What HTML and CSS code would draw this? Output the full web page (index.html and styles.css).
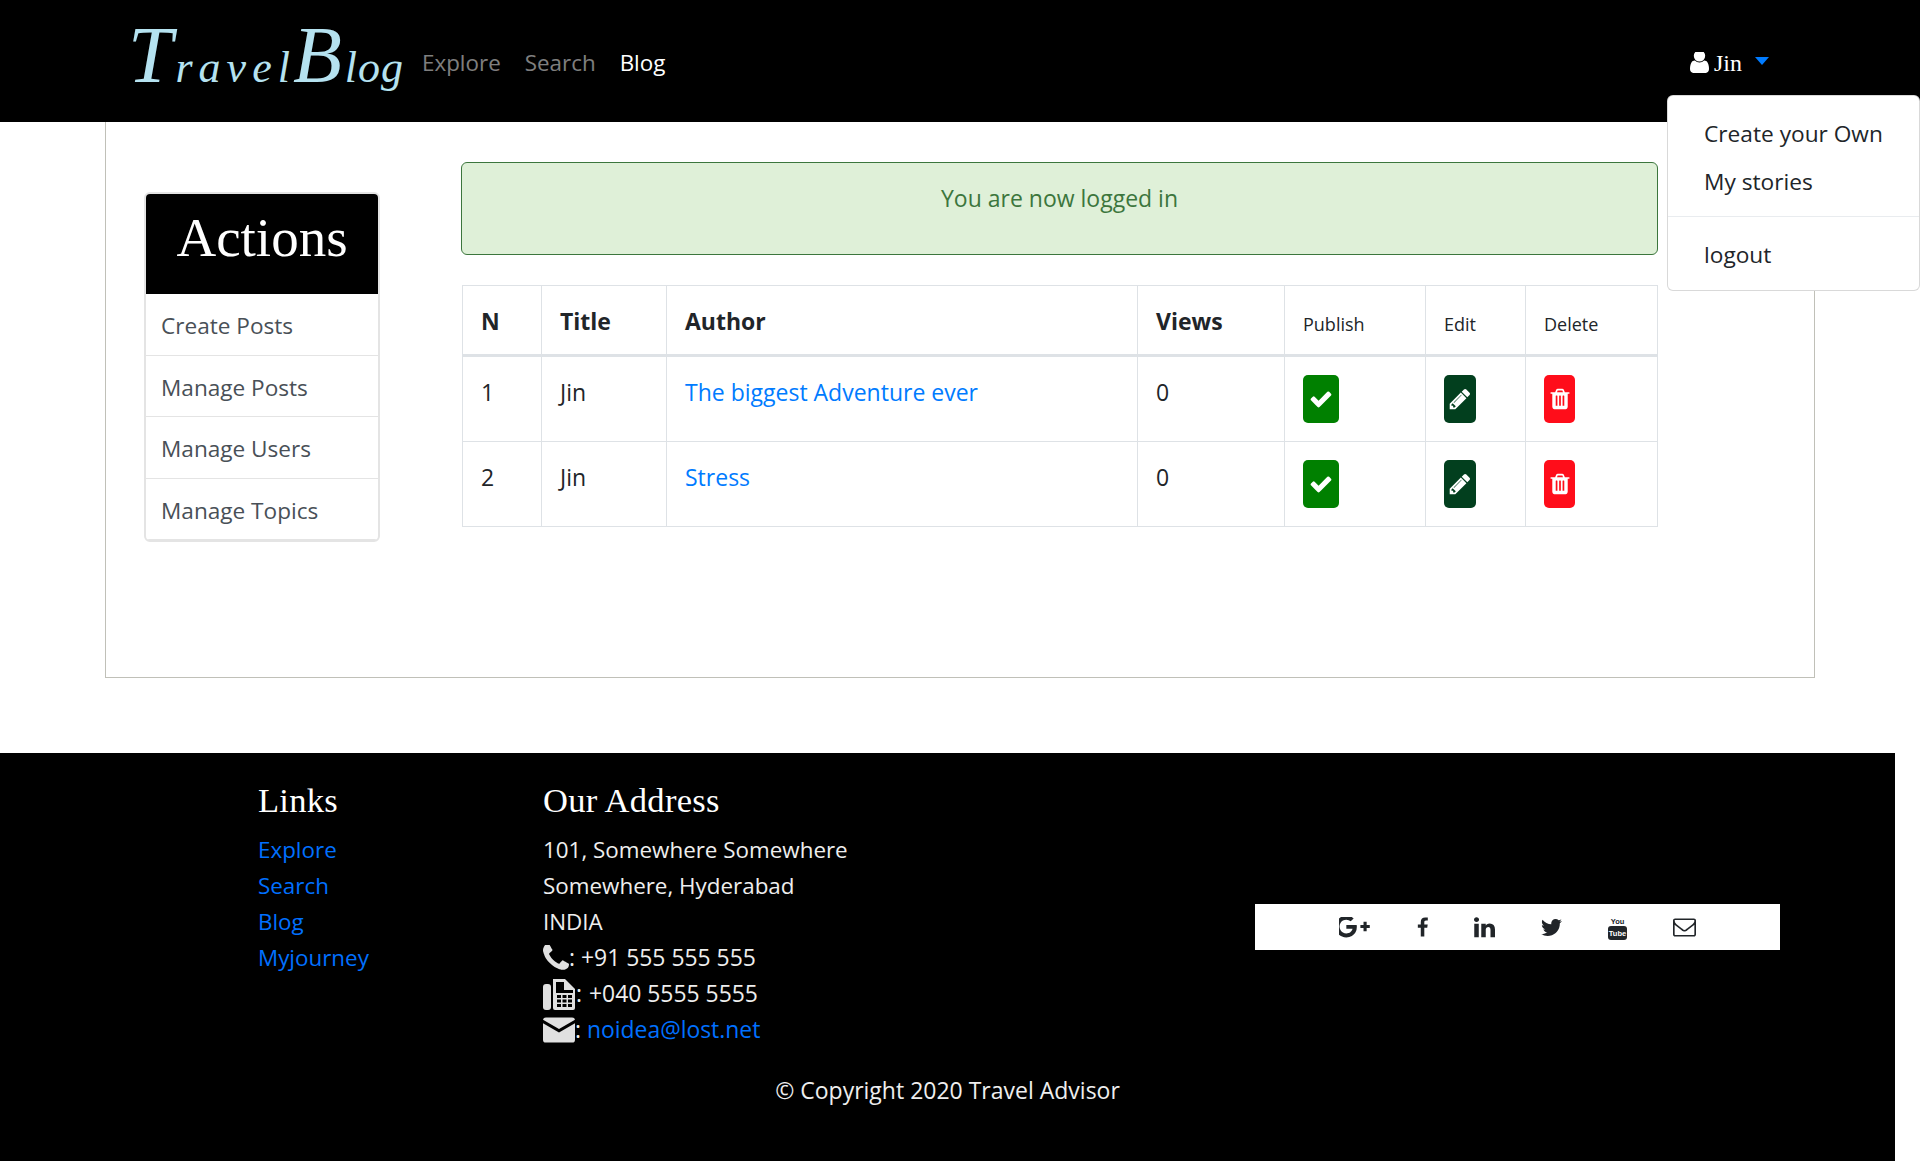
FILE: index.html
```html
<!DOCTYPE html>
<html lang="en">
<head>
<meta charset="utf-8">
<title>TravelBlog</title>
<link rel="stylesheet" href="styles.css">
</head>
<body>
<header class="navbar">
  <a class="logo" href="#"><span class="logo-t">T</span><span class="logo-ravel">ravel</span><span class="logo-bb">B</span><span class="logo-log">log</span></a>
  <nav class="nav-links">
    <a href="#">Explore</a>
    <a href="#">Search</a>
    <a class="active" href="#">Blog</a>
  </nav>
  <div class="user">
    <svg class="user-icon" viewBox="256 256 1280 1408"><path d="M1536 1399q0 109-62.500 187t-150.500 78h-854q-88 0-150.500-78t-62.500-187q0-85 8.500-160.500t31.500-152 58.500-131 94-89 134.500-34.500q131 128 313 128t313-128q76 0 134.500 34.500t94 89 58.500 131 31.500 152 8.500 160.500zm-256-887q0 159-112.500 271.500t-271.500 112.500-271.500-112.500-112.500-271.500 112.500-271.500 271.500-112.500 271.500 112.500 112.500 271.500z"/></svg>
    <span class="user-name">Jin</span>
    <span class="caret"></span>
  </div>
  <div class="dropdown">
    <a href="#">Create your Own</a>
    <a href="#">My stories</a>
    <hr class="dropdown-divider">
    <a href="#">logout</a>
  </div>
</header>

<main class="main">
  <aside class="card">
    <h2 class="card-title">Actions</h2>
    <a class="card-item" href="#">Create Posts</a>
    <a class="card-item" href="#">Manage Posts</a>
    <a class="card-item" href="#">Manage Users</a>
    <a class="card-item" href="#">Manage Topics</a>
  </aside>
  <section class="content">
    <div class="alert">You are now logged in</div>
    <table class="table">
      <colgroup>
        <col class="c1"><col class="c2"><col class="c3"><col class="c4"><col class="c5"><col class="c6"><col class="c7">
      </colgroup>
      <thead>
        <tr>
          <th>N</th><th>Title</th><th>Author</th><th>Views</th>
          <th class="small">Publish</th><th class="small">Edit</th><th class="small">Delete</th>
        </tr>
      </thead>
      <tbody>
        <tr>
          <td>1</td><td>Jin</td><td><a href="#">The biggest Adventure ever</a></td><td>0</td>
          <td><a class="btn btn-publish" href="#"><svg viewBox="0 0 1792 1792"><path d="M1671 566q0 40-28 68l-724 724-136 136q-28 28-68 28t-68-28l-136-136-362-362q-28-28-28-68t28-68l136-136q28-28 68-28t68 28l294 295 656-657q28-28 68-28t68 28l136 136q28 28 28 68z"/></svg></a></td>
          <td><a class="btn btn-edit" href="#"><svg viewBox="0 0 1792 1792"><path d="M491 1536l91-91-235-235-91 91v107h128v128h107zm523-928q0-22-22-22-10 0-17 7l-542 542q-7 7-7 17 0 22 22 22 10 0 17-7l542-542q7-7 7-17zm-54-192l416 416-832 832h-416v-416zm683 96q0 53-37 90l-166 166-416-416 166-165q36-38 90-38 53 0 91 38l235 234q37 39 37 91z"/></svg></a></td>
          <td><a class="btn btn-delete" href="#"><svg viewBox="0 0 1792 1792"><path d="M704 1376v-704q0-14-9-23t-23-9h-64q-14 0-23 9t-9 23v704q0 14 9 23t23 9h64q14 0 23-9t9-23zm256 0v-704q0-14-9-23t-23-9h-64q-14 0-23 9t-9 23v704q0 14 9 23t23 9h64q14 0 23-9t9-23zm256 0v-704q0-14-9-23t-23-9h-64q-14 0-23 9t-9 23v704q0 14 9 23t23 9h64q14 0 23-9t9-23zm-544-992h448l-48-117q-7-9-17-11h-317q-10 2-17 11zm928 32v64q0 14-9 23t-23 9h-96v948q0 83-47 143.500t-113 60.500h-832q-66 0-113-58.500t-47-141.500v-952h-96q-14 0-23-9t-9-23v-64q0-14 9-23t23-9h309l70-167q15-37 54-63t79-26h320q40 0 79 26t54 63l70 167h309q14 0 23 9t9 23z"/></svg></a></td>
        </tr>
        <tr>
          <td>2</td><td>Jin</td><td><a href="#">Stress</a></td><td>0</td>
          <td><a class="btn btn-publish" href="#"><svg viewBox="0 0 1792 1792"><path d="M1671 566q0 40-28 68l-724 724-136 136q-28 28-68 28t-68-28l-136-136-362-362q-28-28-28-68t28-68l136-136q28-28 68-28t68 28l294 295 656-657q28-28 68-28t68 28l136 136q28 28 28 68z"/></svg></a></td>
          <td><a class="btn btn-edit" href="#"><svg viewBox="0 0 1792 1792"><path d="M491 1536l91-91-235-235-91 91v107h128v128h107zm523-928q0-22-22-22-10 0-17 7l-542 542q-7 7-7 17 0 22 22 22 10 0 17-7l542-542q7-7 7-17zm-54-192l416 416-832 832h-416v-416zm683 96q0 53-37 90l-166 166-416-416 166-165q36-38 90-38 53 0 91 38l235 234q37 39 37 91z"/></svg></a></td>
          <td><a class="btn btn-delete" href="#"><svg viewBox="0 0 1792 1792"><path d="M704 1376v-704q0-14-9-23t-23-9h-64q-14 0-23 9t-9 23v704q0 14 9 23t23 9h64q14 0 23-9t9-23zm256 0v-704q0-14-9-23t-23-9h-64q-14 0-23 9t-9 23v704q0 14 9 23t23 9h64q14 0 23-9t9-23zm256 0v-704q0-14-9-23t-23-9h-64q-14 0-23 9t-9 23v704q0 14 9 23t23 9h64q14 0 23-9t9-23zm-544-992h448l-48-117q-7-9-17-11h-317q-10 2-17 11zm928 32v64q0 14-9 23t-23 9h-96v948q0 83-47 143.500t-113 60.500h-832q-66 0-113-58.500t-47-141.500v-952h-96q-14 0-23-9t-9-23v-64q0-14 9-23t23-9h309l70-167q15-37 54-63t79-26h320q40 0 79 26t54 63l70 167h309q14 0 23 9t9 23z"/></svg></a></td>
        </tr>
      </tbody>
    </table>
  </section>
</main>

<footer class="footer">
  <div class="footer-row">
    <div class="col-links">
      <h5 class="footer-title">Links</h5>
      <a href="#">Explore</a>
      <a href="#">Search</a>
      <a href="#">Blog</a>
      <a href="#">Myjourney</a>
    </div>
    <div class="col-address">
      <h5 class="footer-title">Our Address</h5>
      <div>101, Somewhere Somewhere</div>
      <div>Somewhere, Hyderabad</div>
      <div>INDIA</div>
      <div class="contact">
        <svg class="contact-icon phone" viewBox="192 192 1408 1408"><path d="M1600 1240q0 27-10 70.500t-21 68.500q-21 50-122 106-94 51-186 51-27 0-53-3.500t-57.500-12.500-47-14.500-55.500-20.500-49-18q-98-35-175-83-127-79-264-216t-216-264q-48-77-83-175-3-9-18-49t-20.500-55.500-14.500-47-12.500-57.500-3.500-53q0-92 51-186 56-101 106-122 25-11 68.500-21t70.500-10q14 0 21 3 18 6 53 76 11 19 30 54t35 63.500 31 53.500q3 4 17.500 25t21.500 35.500 7 28.500q0 20-28.500 50t-62 55-62 53-28.500 46q0 9 5 22.500t8.500 20.500 14 24 11.500 19q76 137 174 235t235 174q2 1 19 11.500t24 14 20.500 8.500 22.500 5q18 0 46-28.500t53-62 55-62 50-28.500q14 0 28.500 7t35.500 21.500 25 17.500q25 15 53.500 31t63.500 35 54 30q70 35 76 53 3 7 3 21z"/></svg><span>: +91 555 555 555</span>
      </div>
      <div class="contact">
        <svg class="contact-icon fax" viewBox="0 0 33 33">
          <rect x="0" y="6" width="8" height="26" rx="3"/>
          <path d="M10 1h12l10 10v19a2 2 0 0 1-2 2H12a2 2 0 0 1-2-2z"/>
          <path class="fax-hole" d="M13 4h8v8h9v3H13z"/>
          <path class="fax-hole" d="M14 17h4v3h-4zM19.500 17h4v3h-4zM25 17h4v3h-4zM14 21.500h4v3h-4zM19.500 21.500h4v3h-4zM25 21.500h4v3h-4zM14 26h4v3h-4zM19.500 26h4v3h-4zM25 26h4v3h-4z"/>
        </svg><span>: <span class="fax-num">+040 5555 5555</span></span>
      </div>
      <div class="contact">
        <svg class="contact-icon mail" viewBox="0 0 33 26">
          <path d="M3 0h27a3 3 0 0 1 3 2.500L16.500 12 0 2.500A3 3 0 0 1 3 0z"/>
          <path d="M0 6l16.500 9.500L33 6v17a3 3 0 0 1-3 3H3a3 3 0 0 1-3-3z"/>
        </svg><span>: <a href="#">noidea@lost.net</a></span>
      </div>
    </div>
    <div class="social">
      <svg class="s-gplus" viewBox="0 256 2048 1408"><path d="M1181 913q0 208-87 370.500t-248 254-369 91.500q-149 0-285-58t-234-156-156-234-58-285 58-285 156-234 234-156 285-58q286 0 491 192l-199 191q-117-113-292-113-123 0-227.500 62t-165.500 168.500-61 232.500 61 232.500 165.500 168.500 227.500 62q83 0 152.500-23t114.500-57.500 78.500-78.500 49-83 21.500-74h-416v-252h692q12 63 12 122zm867-122v210h-209v209h-210v-209h-209v-210h209v-209h210v209h209z"/></svg>
      <svg class="s-fb" viewBox="320 0 1040 1664"><path d="M1343 12v264h-157q-86 0-116 36t-30 108v189h293l-39 296h-254v759h-306v-759h-255v-296h255v-218q0-186 104-288.500t277-102.500q147 0 228 12z"/></svg>
      <svg class="s-in" viewBox="128 128 1536 1536"><path d="M477 625v991h-330v-991h330zm21-306q1 73-50.500 122t-135.500 49h-2q-82 0-132-49t-50-122q0-74 51.500-122.500t134.500-48.500 133 48.500 51 122.500zm1166 729v568h-329v-530q0-105-40.500-164.500t-126.500-59.500q-63 0-105.500 34.500t-63.500 85.500q-11 30-11 81v553h-329q2-399 2-647t-1-296l-1-48h329v144h-2q20-32 41-56t56.500-52 87-43.500 114.500-15.500q171 0 275 113.500t104 332.500z"/></svg>
      <svg class="s-tw" viewBox="108 256 1576 1280"><path d="M1684 408q-67 98-162 167 1 14 1 42 0 130-38 259.500t-115.500 248.500-184.500 210.500-258 146-323 54.500q-271 0-496-145 35 4 78 4 225 0 401-138-105-2-188-64.500t-114-159.500q33 5 61 5 43 0 85-11-112-23-185.500-111.500t-73.500-205.500v-4q68 38 146 41-66-44-105-115t-39-154q0-88 44-163 121 149 294.500 238.500t371.500 99.500q-8-38-8-74 0-134 94.500-228.500t228.500-94.500q140 0 236 102 109-21 205-78-37 115-142 178 92-10 184-50z"/></svg>
      <svg class="s-yt" viewBox="0 0 19 25">
        <text class="yt-you" x="9.500" y="9" text-anchor="middle">You</text>
        <rect y="11" width="19" height="14" rx="3"/>
        <text class="yt-tube" x="9.500" y="21" text-anchor="middle">Tube</text>
      </svg>
      <svg class="s-env" viewBox="0 256 1792 1408"><path d="M1664 1504v-768q-32 36-69 66-268 206-426 338-51 43-83 67t-86.500 48.500-102.500 24.500h-2q-48 0-102.500-24.500t-86.500-48.500-83-67q-158-132-426-338-37-30-69-66v768q0 13 9.500 22.500t22.500 9.500h1472q13 0 22.500-9.500t9.500-22.500zm0-1051v-24.500l-.5-13-3-12.500-5.500-9-9-7.500-14-2.500h-1472q-13 0-22.500 9.500t-9.500 22.500q0 168 147 284 193 152 401 317 6 5 35 29.500t46 37.500 44.500 31.500 50.500 27.500 43 9h2q20 0 43-9t50.500-27.500 44.500-31.500 46-37.500 35-29.500q208-165 401-317 54-43 100.500-115.500t46.500-131.500zm128-37v1088q0 66-47 113t-113 47h-1472q-66 0-113-47t-47-113v-1088q0-66 47-113t113-47h1472q66 0 113 47t47 113z"/></svg>
    </div>
  </div>
  <p class="copyright">© Copyright 2020 Travel Advisor</p>
</footer>
</body>
</html>
```

FILE: styles.css
```css
* { box-sizing: border-box; }
html, body { margin: 0; padding: 0; }
body {
  width: 1920px;
  height: 1161px;
  overflow: hidden;
  background: #fff;
  color: #212529;
  font-family: "Open Sans", "Noto Sans", sans-serif;
  font-size: 22.4px;
  line-height: 36px;
}
a { color: #007bff; text-decoration: none; }

/* navbar */
.navbar {
  position: relative;
  display: flex;
  align-items: center;
  height: 122px;
  padding: 0 151px 0 128px;
  background: #000;
}
.logo {
  flex: none;
  width: 294px;
  color: #b5e2f0;
  font-family: "Liberation Serif", serif;
  font-style: italic;
  font-size: 44px;
  line-height: 80px;
  white-space: nowrap;
}
.logo-t, .logo-bb { font-size: 80px; }
.logo-t { margin-right: 3px; }
.logo-ravel { letter-spacing: 6px; }
.logo-bb { margin-left: -3px; margin-right: 3px; }
.logo-log { letter-spacing: 1px; }
.nav-links { display: flex; gap: 24px; margin-top: 3px; }
.nav-links a { color: rgba(255, 255, 255, .5); font-size: 22.4px; }
.nav-links a.active { color: #fff; }
.user {
  display: flex;
  align-items: center;
  margin-top: 3px;
  margin-left: auto;
  color: #fff;
  font-family: "Liberation Serif", serif;
  font-size: 24px;
}
.user-icon { width: 19px; height: 21px; fill: #fff; margin-right: 5px; }
.caret {
  width: 0;
  height: 0;
  margin-left: 13px;
  margin-bottom: 3px;
  border-top: 8px solid #007bff;
  border-left: 7.5px solid transparent;
  border-right: 7.5px solid transparent;
}
.dropdown {
  position: absolute;
  left: 1667px;
  top: 95px;
  width: 253px;
  height: 196px;
  padding: 14px 0 0;
  background: #fff;
  border: 1px solid rgba(0, 0, 0, .15);
  border-radius: 6px;
  z-index: 5;
}
.dropdown a {
  display: block;
  height: 48px;
  line-height: 48px;
  padding-left: 36px;
  color: #212529;
  font-size: 22.7px;
}
.dropdown-divider { margin: 10px 0 14px; border: 0; border-top: 1px solid #e9ecef; }

/* main */
.main {
  display: flex;
  align-items: flex-start;
  width: 1710px;
  height: 556px;
  margin: 0 0 75px 105px;
  padding: 40px 0 0 38px;
  border: 1px solid #c0c0b8;
  border-top: 0;
}
.card {
  display: flex;
  flex-direction: column;
  flex: none;
  width: 236px;
  height: 350px;
  margin: 30px 81px 0 0;
  border: 2px solid #e4e4e4;
  border-radius: 6px;
  overflow: hidden;
}
.card-title {
  flex: none;
  height: 100px;
  margin: 0;
  background: #000;
  color: #fff;
  font-family: "Liberation Serif", serif;
  font-weight: 400;
  font-size: 55px;
  line-height: 88px;
  text-align: center;
}
.card-item {
  flex: none;
  height: 61.500px;
  padding: 14px 15px 0;
  color: #495057;
  font-size: 22.6px;
  border-bottom: 1px solid #e4e4e4;
}
.content { flex: none; width: 1197px; }
.alert {
  height: 93px;
  margin-bottom: 30px;
  padding-top: 17px;
  background: #dff0d8;
  border: 1px solid #3c763d;
  border-radius: 6px;
  color: #3c763d;
  font-size: 23px;
  text-align: center;
}
.table {
  width: 1195px;
  margin-left: 1px;
  table-layout: fixed;
  border-collapse: collapse;
  font-size: 23px;
}
.c1 { width: 79px; } .c2 { width: 125px; } .c3 { width: 471px; } .c4 { width: 147px; }
.c5 { width: 141px; } .c6 { width: 100px; } .c7 { width: 132px; }
.table th, .table td {
  padding: 18px;
  border: 1px solid #dee2e6;
  text-align: left;
  vertical-align: top;
}
.table th {
  height: 70px;
  padding-top: 17px;
  padding-bottom: 0;
  border-bottom: 3px solid #dee2e6;
  font-weight: 700;
}
.table th.small { padding-top: 20px; font-size: 18px; font-weight: 400; }
.table td { height: 85px; padding-top: 17px; }
.btn {
  display: flex;
  align-items: center;
  justify-content: center;
  height: 48px;
  margin-top: 1px;
  border-radius: 5px;
}
.btn svg { width: 24px; height: 24px; fill: #fff; }
.btn-publish { width: 36px; background: #008000; }
.btn-edit { width: 32px; background: #023f1e; }
.btn-delete { width: 31px; background: #ff0d1a; }

/* footer */
.footer {
  width: 1895px;
  height: 408px;
  padding-top: 25px;
  background: #000;
  color: #fff;
}
.footer-row { display: flex; align-items: flex-start; padding-left: 258px; }
.footer-row a { color: #0070ff; }
.footer-title {
  margin: 0 0 10px;
  font-family: "Liberation Serif", serif;
  font-size: 34.5px;
  font-weight: 400;
  line-height: 44px;
  letter-spacing: .3px;
}
.col-links { display: flex; flex-direction: column; flex: none; width: 285px; }
.col-address { flex: none; width: 712px; color: #eee; }
.col-address .footer-title { color: #fff; }
.contact { display: flex; align-items: center; height: 36px; font-size: 22.9px; }
.contact-icon { flex: none; fill: #e0e0e0; }
.phone { width: 26px; height: 26px; }
.fax { width: 33px; height: 33px; }
.mail { width: 32px; height: 26px; }
.fax-hole { fill: #000; }
.fax-num { margin-left: 1px; }
.social {
  display: flex;
  align-items: center;
  justify-content: center;
  gap: 46px;
  width: 525px;
  height: 46px;
  margin-top: 126px;
  background: #fff;
}
.social svg { display: block; fill: #212529; }
.s-gplus { width: 31px; height: 21px; }
.s-fb { width: 12px; height: 24px; }
.s-in { width: 21px; height: 21px; }
.s-tw { width: 21px; height: 17px; }
.s-yt { width: 19px; height: 25px; }
.s-env { width: 23px; height: 19px; }
.yt-you, .yt-tube { font-family: "Liberation Sans", sans-serif; font-weight: 700; font-size: 7.500px; }
.yt-you { fill: #212529; }
.yt-tube { fill: #fff; }
.copyright { margin: 24px 0 0; text-align: center; color: #eee; font-size: 23px; }
```
